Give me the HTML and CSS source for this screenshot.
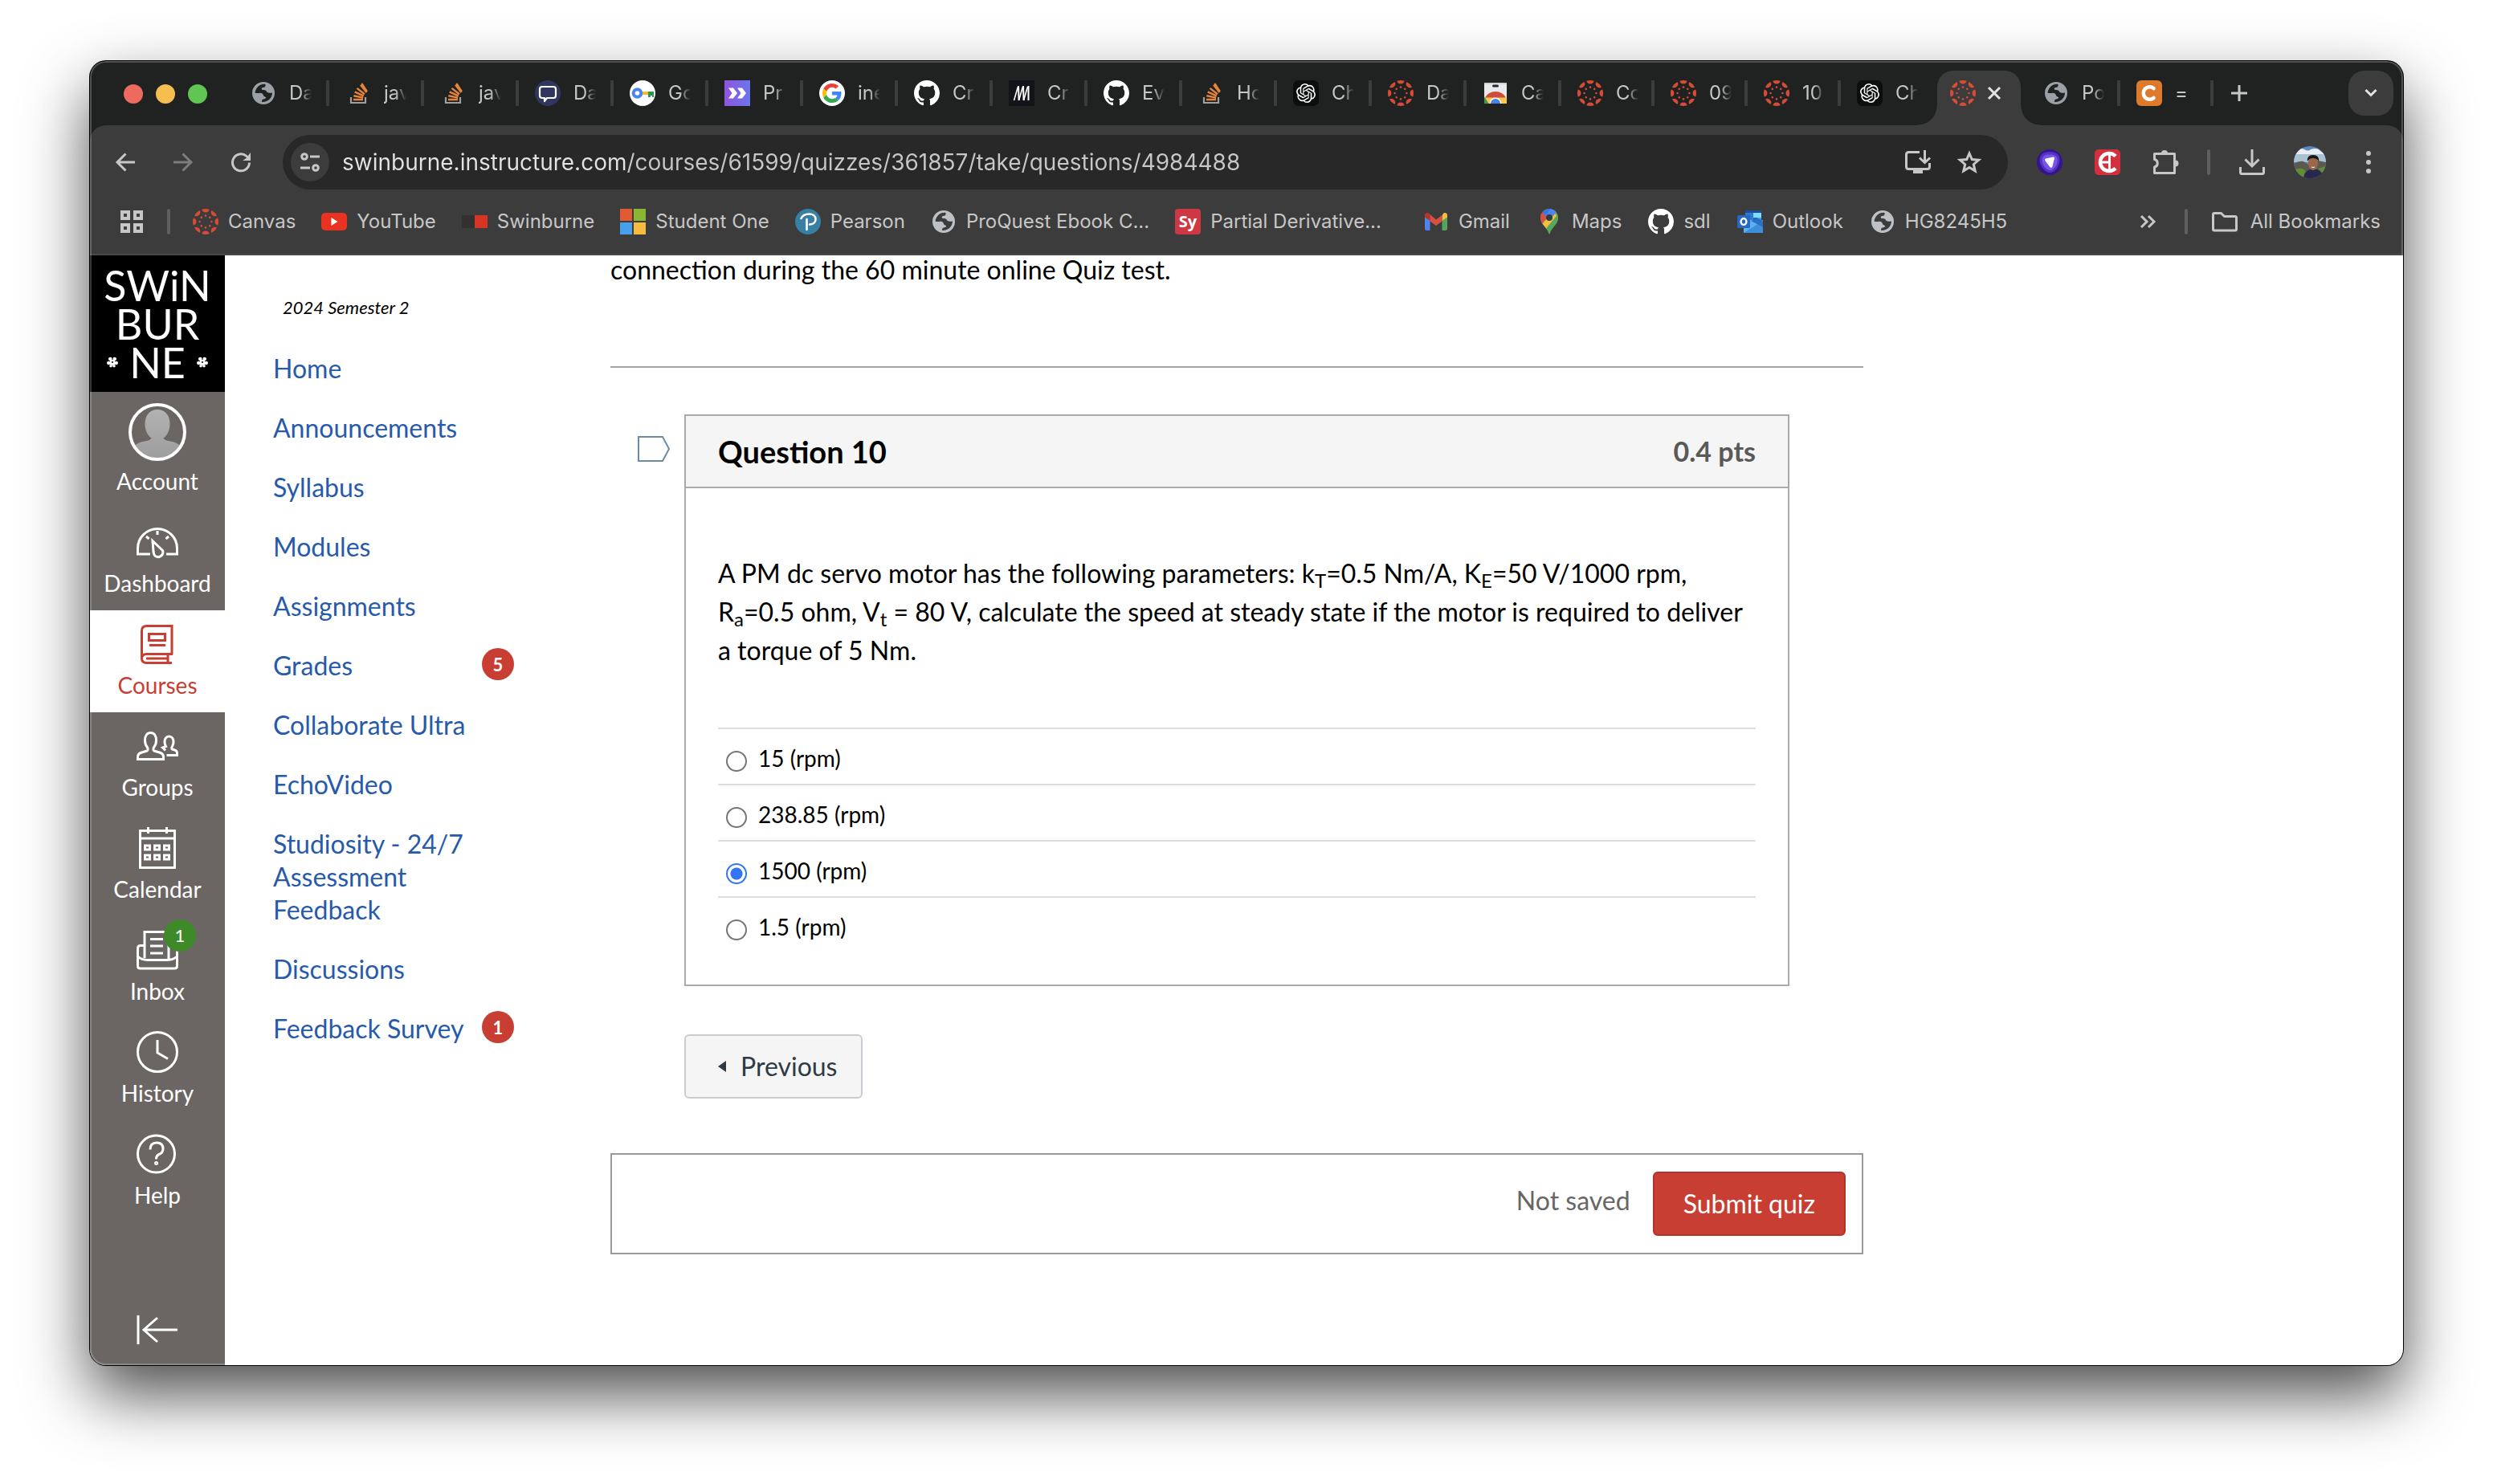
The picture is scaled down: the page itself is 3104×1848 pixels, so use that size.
FILE: index.html
```html
<!DOCTYPE html>
<html lang="en">
<head>
<meta charset="utf-8">
<meta name="viewport" content="width=device-width, initial-scale=1">
<title>Quiz: Question 10</title>
<link rel="stylesheet" href="styles.css">
</head>
<body>
<svg class="sprite" aria-hidden="true">
  <defs>
    <linearGradient id="gradPurple" x1="0" x2="1"><stop offset="0" stop-color="#8f55dd"/><stop offset="1" stop-color="#6a76ea"/></linearGradient>
    <linearGradient id="gradPerson" x1="0" x2="0" y1="0" y2="1"><stop offset="0" stop-color="#b2b2b2"/><stop offset="1" stop-color="#9c9c9c"/></linearGradient>
    <clipPath id="clipFace"><circle cx="20" cy="20" r="20"/></clipPath>
    <clipPath id="clipPerson"><circle cx="36" cy="36" r="33"/></clipPath>
    <clipPath id="clipStore"><rect x="2" y="3" width="28" height="26"/></clipPath>
    <clipPath id="clipPin"><path d="M16 0C9.600 0 5 5 5 11.200c0 4.300 2.300 7.300 5 10.600 2.700 3.300 4.700 6.200 6 10.200 1.300-4 3.300-6.900 6-10.200 2.700-3.300 5-6.300 5-10.600C27 5 22.400 0 16 0z"/></clipPath>
    <g id="petal">
      <path d="M11.400 .7A16 16 0 0 1 20.600 .7A4.700 4.700 0 0 1 11.400 .7Z"/>
      <circle cx="16" cy="8.600" r="1.300"/>
    </g>
  </defs>
  <symbol id="i-canvas" viewBox="0 0 32 32">
    <g fill="#d64c38">
      <use href="#petal"/><use href="#petal" transform="rotate(45 16 16)"/><use href="#petal" transform="rotate(90 16 16)"/><use href="#petal" transform="rotate(135 16 16)"/>
      <use href="#petal" transform="rotate(180 16 16)"/><use href="#petal" transform="rotate(225 16 16)"/><use href="#petal" transform="rotate(270 16 16)"/><use href="#petal" transform="rotate(315 16 16)"/>
    </g>
  </symbol>
  <symbol id="i-globe" viewBox="0 0 32 32">
    <path fill="currentColor" fill-rule="evenodd" d="M16 2a14 14 0 1 0 0 28 14 14 0 0 0 0-28zM18.500 4.900c-4.200-.6-8.500 1.400-11 5-.9 1.400-1.700 3.300-2 5.600 1.800.7 4.500.5 6.300.3 2.300-.1 3.700 1.300 4.100 2.900.6 1.700 2.200 1.500 3.300 2.500-.2 1.800-1.800 2-3.300 2.200-1.700.4-1.900 2-1.900 3.300 3.800.8 8.300-1 10.700-4.400 1.400-1.900 2.300-4.300 2.300-6.800-2 .3-4.500.7-6.200-.4-1-.7-.9-2.300-2.300-2.700-1.900-.5-4.200.2-4.800-1.700-.3-1.800 1.800-1.800 3.200-2 1.600-.3 1.700-1.800 1.600-3.800z"/>
  </symbol>
  <symbol id="i-stack" viewBox="0 0 32 32">
    <path fill="none" stroke="#9ca0a5" stroke-width="2.200" d="M7 21v7h18v-7"/>
    <g stroke="#e8833a" stroke-width="2.400"><path d="M10 24h12M10.300 19.200l11.900 2.400M11.700 14.400l11 5M14.500 9.900l9.400 7.300M19 5.800l7.400 9.300M20.300 4l6.600 10"/></g>
  </symbol>
  <symbol id="i-chat" viewBox="0 0 32 32">
    <circle cx="16" cy="16" r="16" fill="#30365e"/>
    <path fill="none" stroke="#fff" stroke-width="2.200" stroke-linejoin="round" d="M9 8h14q3 0 3 3v8q0 3-3 3h-8l-3 4v-4H9q-3 0-3-3v-8q0-3 3-3z"/>
  </symbol>
  <symbol id="i-key" viewBox="0 0 32 32">
    <circle cx="16" cy="16" r="16" fill="#fff"/>
    <path fill="#f9bb2d" d="M13 14h11v4H13z"/><path fill="#e94335" d="M13 14h3v4h-3z"/><path fill="#2e9648" d="M23 14h7v7h-2v-2h-2v2h-3z"/>
    <circle cx="9.500" cy="16" r="4.800" fill="none" stroke="#4a84f0" stroke-width="4"/>
  </symbol>
  <symbol id="i-dash" viewBox="0 0 32 32">
    <path fill="url(#gradPurple)" d="M0 0h32v32H0z"/><path fill="#fff" d="M5 9.500h6l5 6.500-5 6.500H5L9.500 16zM16 9.500h6l5 6.500-5 6.500h-6l4.500-6.500z"/>
  </symbol>
  <symbol id="i-google" viewBox="0 0 32 32">
    <circle cx="16" cy="16" r="16" fill="#fff"/>
    <g transform="translate(4 4) scale(.5)">
      <path fill="#EA4335" d="M24 9.500c3.540 0 6.710 1.220 9.210 3.600l6.850-6.850C35.900 2.380 30.470 0 24 0 14.620 0 6.510 5.380 2.560 13.220l7.980 6.190C12.430 13.720 17.740 9.500 24 9.500z"/>
      <path fill="#4285F4" d="M46.980 24.550c0-1.570-.15-3.090-.38-4.550H24v9.020h12.940c-.58 2.960-2.260 5.480-4.780 7.180l7.730 6c4.510-4.180 7.090-10.360 7.090-17.650z"/>
      <path fill="#FBBC05" d="M10.530 28.590c-.48-1.450-.76-2.990-.76-4.590s.27-3.140.76-4.590l-7.980-6.190C.92 16.460 0 20.120 0 24c0 3.880.92 7.540 2.560 10.780l7.970-6.190z"/>
      <path fill="#34A853" d="M24 48c6.480 0 11.930-2.130 15.890-5.810l-7.730-6c-2.150 1.450-4.920 2.300-8.160 2.300-6.260 0-11.570-4.220-13.470-9.910l-7.980 6.190C6.510 42.620 14.620 48 24 48z"/>
    </g>
  </symbol>
  <symbol id="i-github" viewBox="0 0 16 16">
    <path fill="#fff" d="M8 0C3.580 0 0 3.580 0 8c0 3.540 2.290 6.530 5.470 7.590.4.070.55-.17.55-.38 0-.19-.01-.82-.01-1.490-2.010.37-2.530-.49-2.690-.94-.09-.23-.48-.94-.82-1.130-.28-.15-.68-.52-.01-.53.63-.01 1.080.58 1.230.82.72 1.210 1.870.87 2.330.66.07-.52.28-.87.51-1.070-1.780-.2-3.640-.89-3.640-3.950 0-.87.31-1.590.82-2.150-.08-.2-.36-1.020.08-2.120 0 0 .67-.21 2.200.82.64-.18 1.320-.27 2-.27.68 0 1.360.09 2 .27 1.530-1.040 2.200-.82 2.200-.82.44 1.100.16 1.920.08 2.120.51.56.82 1.270.82 2.150 0 3.070-1.870 3.750-3.650 3.950.29.25.54.73.54 1.480 0 1.070-.01 1.930-.01 2.200 0 .21.15.46.55.38A8.013 8.013 0 0 0 16 8c0-4.420-3.580-8-8-8z"/>
  </symbol>
  <symbol id="i-m" viewBox="0 0 32 32">
    <path fill="#13131a" d="M0 0h32v32H0z"/><path fill="none" stroke="#fff" stroke-width="1.600" d="M6.500 25l5-17M12.500 25l5-17M18.500 25l5-17"/><path stroke="#fff" stroke-width="2" d="M12 7l.6 18M18 7l.6 18M24.500 7v18"/>
  </symbol>
  <symbol id="i-gpt" viewBox="0 0 32 32">
    <rect width="32" height="32" rx="7" fill="#0c0d0d"/>
    <path fill="#fff" transform="translate(4 4)" d="M22.2819 9.8211a5.9847 5.9847 0 0 0-.5157-4.9108 6.0462 6.0462 0 0 0-6.5098-2.9A6.0651 6.0651 0 0 0 4.9807 4.1818a5.9847 5.9847 0 0 0-3.9977 2.9 6.0462 6.0462 0 0 0 .7427 7.0966 5.98 5.98 0 0 0 .511 4.9107 6.051 6.051 0 0 0 6.5146 2.9001A5.9847 5.9847 0 0 0 13.2599 24a6.0557 6.0557 0 0 0 5.7718-4.2058 5.9894 5.9894 0 0 0 3.9977-2.9001 6.0557 6.0557 0 0 0-.7475-7.0729zm-9.022 12.6081a4.4755 4.4755 0 0 1-2.8764-1.0408l.1419-.0804 4.7783-2.7582a.7948.7948 0 0 0 .3927-.6813v-6.7369l2.02 1.1686a.071.071 0 0 1 .038.052v5.5826a4.504 4.504 0 0 1-4.4945 4.4944zm-9.6607-4.1254a4.4708 4.4708 0 0 1-.5346-3.0137l.142.0852 4.783 2.7582a.7712.7712 0 0 0 .7806 0l5.8428-3.3685v2.3324a.0804.0804 0 0 1-.0332.0615L9.74 19.9502a4.4992 4.4992 0 0 1-6.1408-1.6464zM2.3408 7.8956a4.485 4.485 0 0 1 2.3655-1.9728V11.6a.7664.7664 0 0 0 .3879.6765l5.8144 3.3543-2.0201 1.1685a.0757.0757 0 0 1-.071 0l-4.8303-2.7865A4.504 4.504 0 0 1 2.3408 7.872zm16.5963 3.8558L13.1038 8.364 15.1192 7.2a.0757.0757 0 0 1 .071 0l4.8303 2.7913a4.4944 4.4944 0 0 1-.6765 8.1042v-5.6772a.79.79 0 0 0-.407-.667zm2.0107-3.0231l-.142-.0852-4.7735-2.7818a.7759.7759 0 0 0-.7854 0L9.409 9.2297V6.8974a.0662.0662 0 0 1 .0284-.0615l4.8303-2.7866a4.4992 4.4992 0 0 1 6.6802 4.66zM8.3065 12.863l-2.02-1.1638a.0804.0804 0 0 1-.038-.0567V6.0742a4.4992 4.4992 0 0 1 7.3757-3.4537l-.142.0805L8.704 5.459a.7948.7948 0 0 0-.3927.6813zm1.0976-2.3654l2.602-1.4998 2.6069 1.4998v2.9994l-2.5974 1.4997-2.6067-1.4997Z"/>
  </symbol>
  <symbol id="i-store" viewBox="0 0 32 32">
    <g clip-path="url(#clipStore)">
      <path fill="#e9eaec" d="M2 3h28v26H2z"/><path fill="#cfd1d5" d="M2 3h28v2H2z"/><rect x="12" y="5.500" width="8" height="3" rx="1.500" fill="#26282c"/>
      <circle cx="16" cy="29" r="15" fill="#fbc94a"/><path fill="#cf4a3f" d="M3 21.500A15 15 0 0 1 29 21.500H16z"/><path fill="#3f9a55" d="M3 21.500L10 33H0V21z"/>
      <circle cx="16" cy="29" r="7.500" fill="#fff"/><circle cx="16" cy="29" r="6" fill="#4a80ea"/>
    </g>
  </symbol>
  <symbol id="i-c" viewBox="0 0 32 32">
    <rect width="32" height="32" rx="6" fill="#de7a2b"/><path fill="none" stroke="#fff" stroke-width="4.500" stroke-linecap="round" d="M21.500 10a7.800 7.800 0 1 0 0 12"/>
  </symbol>
  <symbol id="i-youtube" viewBox="0 0 32 32"><rect y="5" width="32" height="22" rx="5" fill="#ea3223"/><path fill="#fff" d="M12.500 11l8 5-8 5z"/></symbol>
  <symbol id="i-swin" viewBox="0 0 32 32"><path fill="#313131" d="M0 8h16v16H0z"/><path fill="#d93526" d="M16 8h16v16H16z"/></symbol>
  <symbol id="i-ms" viewBox="0 0 32 32"><path fill="#e05b32" d="M0 0h15v15H0z"/><path fill="#8ab733" d="M17 0h15v15H17z"/><path fill="#48a0ea" d="M0 17h15v15H0z"/><path fill="#f6bb41" d="M17 17h15v15H17z"/></symbol>
  <symbol id="i-pearson" viewBox="0 0 32 32"><circle cx="16" cy="16" r="16" fill="#377fa3"/><path fill="none" stroke="#fff" stroke-width="2.600" stroke-linecap="round" d="M7.500 12c2-4.500 6-5.500 10-5.500 5 0 8 2.500 8 6.500 0 4.200-3.500 6.500-7.500 6.500M14.500 13v13"/></symbol>
  <symbol id="i-sy" viewBox="0 0 32 32"><rect width="32" height="32" rx="4" fill="#ce3744"/><text x="16" y="23" text-anchor="middle" class="sy-mark">Sy</text></symbol>
  <symbol id="i-gmail" viewBox="0 0 32 32">
    <path fill="#4f83ee" d="M2 9v15.500Q2 27 4.500 27H8.500V13z"/><path fill="#56a45a" d="M23.500 13v14h4Q30 27 30 24.500V9z"/><path fill="#f2bd42" d="M23.500 8.500V15L30 10.500V8c0-2.600-3-3.800-5-2.300z"/><path fill="#b83428" d="M2 8v2.500L8.500 15V8.500L7 5.700C5 4.200 2 5.400 2 8z"/><path fill="#d8503f" d="M8.500 8v7.500L16 21l7.500-5.500V8L16 13.500 7 5.700z"/>
  </symbol>
  <symbol id="i-maps" viewBox="0 0 32 32">
    <g clip-path="url(#clipPin)"><path fill="#58a55c" d="M0 0h32v32H0z"/><path fill="#f2bd42" d="M5 21L21 3l6 8-12 16z"/><path fill="#58a55c" d="M12 24.500L27.500 6v26H16z"/><path fill="#d8503f" d="M4 5l4-2 6 7-7 9-3-5z"/><path fill="#4f83ee" d="M7 4l9-5h6l3 5-9 10z"/><path fill="#3a74dc" d="M7 4l4-4h6l-5 8z"/></g>
    <circle cx="16" cy="11" r="4" fill="#2d3c3c"/>
  </symbol>
  <symbol id="i-outlook" viewBox="0 0 32 32">
    <path fill="#1c4a9c" d="M10 2h20v5H10z"/><path fill="#2e7cd2" d="M10 5h10v14H10z"/><path fill="#7fdbfb" d="M20 5h10v6H20z"/><path fill="#3aa0e8" d="M20 11h10v8H20z"/><path fill="#2467b8" d="M20 11h5v6h-5z"/><path fill="#5ab2ee" d="M8 14h24v16H8z"/><path fill="#3d8fdb" d="M8 30l24-15v15z"/><path fill="#2c6fc2" d="M17 15l15 8v-8l-6-3z"/>
    <rect y="8" width="16" height="16" rx="1.500" fill="#2867c4"/><ellipse cx="8" cy="16" rx="3.400" ry="4" fill="none" stroke="#fff" stroke-width="2.400"/>
  </symbol>
  <symbol id="i-folder" viewBox="0 0 32 32"><path fill="none" stroke="#c7c7c7" stroke-width="3" stroke-linejoin="round" d="M3 5.500h8.500l4 4H29q1.500 0 1.500 1.500v14.500Q30.500 27 29 27H3q-1.500 0-1.500-1.500V7q0-1.500 1.500-1.500z"/></symbol>
  <symbol id="i-flower" viewBox="0 0 14 14">
    <g fill="#fff"><circle cx="7" cy="9.500" r="1.600"/><circle cx="4.300" cy="3" r="2.300"/><circle cx="9.700" cy="3" r="2.300"/><circle cx="2.300" cy="8" r="2.300"/><circle cx="11.700" cy="8" r="2.300"/><circle cx="5" cy="11.800" r="1.800"/><circle cx="9" cy="11.800" r="1.800"/><path d="M4 4h6v6H4z"/></g><circle cx="7" cy="7" r="1" fill="#000"/>
  </symbol>
</svg>

<main class="window">
  <header class="tabstrip">
    <div class="lights"><span class="light light-close"></span><span class="light light-min"></span><span class="light light-max"></span></div>
    <div class="tabs wide">
      <button class="tab"><svg class="ico grey"><use href="#i-globe"/></svg><span>Da</span></button>
      <button class="tab"><svg class="ico"><use href="#i-stack"/></svg><span>jav</span></button>
      <button class="tab"><svg class="ico"><use href="#i-stack"/></svg><span>jav</span></button>
      <button class="tab"><svg class="ico"><use href="#i-chat"/></svg><span>Da</span></button>
      <button class="tab"><svg class="ico"><use href="#i-key"/></svg><span>Go</span></button>
      <button class="tab"><svg class="ico"><use href="#i-dash"/></svg><span>Pr</span></button>
      <button class="tab"><svg class="ico"><use href="#i-google"/></svg><span>ine</span></button>
      <button class="tab"><svg class="ico"><use href="#i-github"/></svg><span>Cr</span></button>
      <button class="tab"><svg class="ico"><use href="#i-m"/></svg><span>Cr</span></button>
      <button class="tab"><svg class="ico"><use href="#i-github"/></svg><span>Ev</span></button>
      <button class="tab"><svg class="ico"><use href="#i-stack"/></svg><span>Ho</span></button>
      <button class="tab"><svg class="ico"><use href="#i-gpt"/></svg><span>Ch</span></button>
      <button class="tab"><svg class="ico"><use href="#i-canvas"/></svg><span>Da</span></button>
      <button class="tab"><svg class="ico"><use href="#i-store"/></svg><span>Ca</span></button>
    </div>
    <div class="tabs narrow">
      <button class="tab"><svg class="ico"><use href="#i-canvas"/></svg><span>Co</span></button>
      <button class="tab"><svg class="ico"><use href="#i-canvas"/></svg><span>09</span></button>
      <button class="tab"><svg class="ico"><use href="#i-canvas"/></svg><span>10</span></button>
      <button class="tab last"><svg class="ico"><use href="#i-gpt"/></svg><span>Ch</span></button>
      <div class="tab-active">
        <svg class="ico"><use href="#i-canvas"/></svg>
        <button class="plain" aria-label="Close tab"><svg class="x-ico" viewBox="0 0 18 18"><path d="M2 2l14 14M16 2L2 16"/></svg></button>
      </div>
      <button class="tab"><svg class="ico grey"><use href="#i-globe"/></svg><span>Po</span></button>
      <button class="tab"><svg class="ico"><use href="#i-c"/></svg><span>=</span></button>
    </div>
    <button class="plain new-tab" aria-label="New tab"><svg class="plus-ico" viewBox="0 0 20 20"><path d="M10 0v20M0 10h20"/></svg></button>
    <button class="tab-search" aria-label="Search tabs"><svg class="chev-ico" viewBox="0 0 16 12"><path d="M1.500 2L8 8.500 14.500 2"/></svg></button>
  </header>

  <div class="chrome">
    <div class="toolbar">
      <button class="plain" aria-label="Back"><svg class="nav-ico" viewBox="0 0 24 24"><path d="M24 12H2M12.500 1.500L2 12l10.500 10.500"/></svg></button>
      <button class="plain dim" aria-label="Forward"><svg class="nav-ico" viewBox="0 0 24 24"><path d="M0 12h22M11.500 1.500L22 12 11.500 22.500"/></svg></button>
      <button class="plain" aria-label="Reload"><svg class="nav-ico" viewBox="0 0 24 24"><path d="M22.500 12.500A10.500 10.500 0 1 1 19 4.500l3 3"/><path class="fill" d="M24 0v10H14l4.500-3z"/></svg></button>
      <div class="omnibox">
        <button class="site-info" aria-label="View site information"><svg viewBox="0 0 24 24" class="nav-ico"><circle cx="5" cy="5" r="3.300"/><path d="M12 5h12M0 19h12"/><circle cx="19" cy="19" r="3.300"/></svg></button>
        <input class="url" type="text" aria-label="Address and search bar" value="swinburne.instructure.com/courses/61599/quizzes/361857/take/questions/4984488">
        <button class="plain" aria-label="Install"><svg class="tool-ico" viewBox="0 0 32 32"><path d="M18 3.500H4.500q-3 0-3 3v15q0 3 3 3h23q3 0 3-3V17M24.500 1v14M18 10.500l6.500 6 6.500-6"/><path class="fill" d="M10 24h12v6H10z"/></svg></button>
        <button class="plain" aria-label="Bookmark this tab"><svg class="tool-ico" viewBox="0 0 32 32"><path d="M16 5l3.300 7.600 8.300.7-6.300 5.400 1.900 8.100L16 22.500l-7.200 4.300 1.900-8.100-6.300-5.400 8.300-.7z"/></svg></button>
      </div>
      <div class="extensions">
        <button class="plain" aria-label="Shield extension"><svg class="tool-ico" viewBox="0 0 32 32"><g stroke="none"><circle cx="16" cy="16" r="16" fill="#35148f"/><path fill="#5433c4" d="M16 3c7 0 13 3 12.500 10.500C28 22 22 29 16.500 29S4 21 3.500 13.500C3.500 6 9 3 16 3z"/><path fill="#7957e6" d="M16 6.500c5.500 0 10 1.500 9.700 7.500-.4 6-4.700 12-9.200 12S7 19.500 6.500 14C6.500 8 11 6.500 16 6.500z"/><path fill="#fff" d="M11 11.500l9-2q2-.4 2 1.600l-2.700 10.400q-.8 2-2.700.7L10.300 14q-.7-1.800.7-2.500z"/></g></svg></button>
        <button class="plain" aria-label="Capture extension"><svg class="tool-ico" viewBox="0 0 32 32"><rect width="32" height="32" rx="5" fill="#d32f3c" stroke="none"/><path stroke="#fff" stroke-width="4.500" d="M26 8.500A11 11 0 1 0 26 23.500"/><path stroke="#fff" stroke-width="3" d="M18.500 5v22M5 16h12"/></svg></button>
        <button class="plain" aria-label="Extensions"><svg class="tool-ico" viewBox="0 0 32 32"><path d="M2.500 5.500h25v24h-25v-7.500c5-1 5-8.500 0-9.500z" stroke-linejoin="round"/><path class="fill" d="M11 5a4 4 0 0 1 8 0zM28.500 13.500a4 4 0 0 1 0 8z"/></svg></button>
      </div>
      <div class="browser-tools">
        <span class="bar"></span>
        <button class="plain" aria-label="Downloads"><svg class="tool-ico" viewBox="0 0 32 32"><path d="M16 0v21M7.500 12.500L16 21l8.500-8.500M1.500 22v6.500q0 2 2 2h25q2 0 2-2V22"/></svg></button>
        <button class="plain" aria-label="Profile"><svg class="face" viewBox="0 0 40 40"><g clip-path="url(#clipFace)"><path fill="#5d87bb" d="M0 0h40v40H0z"/><path fill="#e9eef4" d="M3 6q5-5 10-2t8 0q8-3 12 2l7 5H0z"/><path fill="#a9c2d2" d="M0 10h40v10H0z"/><path fill="#5c5a50" d="M0 22q6-4 12-3l6 4 12-5 10 2v20H0z"/><path fill="#5f8f35" d="M0 30q7-4 13-1l5 9H0zM30 28l10-3v12z"/><path fill="#28284f" d="M12 40q1-9 8-11h9q7 3 7 11z"/><ellipse cx="24" cy="21" rx="6" ry="9" fill="#9a6749"/><path fill="#1b1718" d="M17 19q-1-8 7-8t7 8q-2-4-7-4t-7 4z"/><path stroke="#fff" stroke-width="1" fill="none" d="M22 26q2 1 4 0"/></g></svg></button>
        <button class="plain" aria-label="Menu"><svg class="dots" viewBox="0 0 6 28"><circle cx="3" cy="3" r="3"/><circle cx="3" cy="14" r="3"/><circle cx="3" cy="25" r="3"/></svg></button>
      </div>
    </div>
    <nav class="bookmarks" aria-label="Bookmarks">
      <button class="plain apps" aria-label="Tab groups"><svg class="grid-ico" viewBox="0 0 28 28"><path d="M2 2h8v8H2zM18 2h8v8h-8zM2 18h8v8H2zM18 18h8v8h-8z"/></svg></button>
      <span class="bar"></span>
      <div class="bookmark-list">
        <a href="#"><svg class="ico"><use href="#i-canvas"/></svg>Canvas</a>
        <a href="#"><svg class="ico"><use href="#i-youtube"/></svg>YouTube</a>
        <a href="#"><svg class="ico"><use href="#i-swin"/></svg>Swinburne</a>
        <a href="#"><svg class="ico"><use href="#i-ms"/></svg>Student One</a>
        <a href="#"><svg class="ico"><use href="#i-pearson"/></svg>Pearson</a>
        <a href="#"><svg class="ico pale"><use href="#i-globe"/></svg>ProQuest Ebook C...</a>
        <a href="#"><svg class="ico"><use href="#i-sy"/></svg>Partial Derivative...</a>
      </div>
      <div class="bookmark-list">
        <a href="#"><svg class="ico"><use href="#i-gmail"/></svg>Gmail</a>
        <a href="#"><svg class="ico"><use href="#i-maps"/></svg>Maps</a>
        <a href="#"><svg class="ico"><use href="#i-github"/></svg>sdl</a>
        <a href="#"><svg class="ico"><use href="#i-outlook"/></svg>Outlook</a>
        <a href="#"><svg class="ico pale"><use href="#i-globe"/></svg>HG8245H5</a>
      </div>
      <button class="plain more" aria-label="More bookmarks"><svg class="more-ico" viewBox="0 0 20 16"><path d="M2 1l7 7-7 7M11 1l7 7-7 7"/></svg></button>
      <span class="bar"></span>
      <a class="all" href="#"><svg class="ico"><use href="#i-folder"/></svg>All Bookmarks</a>
    </nav>
  </div>

  <div class="page">
    <nav class="global-nav" aria-label="Global navigation">
      <a class="logo" href="#" aria-label="Swinburne">
        <span>SWiN</span><span>BUR</span>
        <span class="logo-last"><svg class="flower"><use href="#i-flower"/></svg>NE<svg class="flower"><use href="#i-flower"/></svg></span>
      </a>
      <a class="item account" href="#"><svg class="avatar" viewBox="0 0 72 72"><circle cx="36" cy="36" r="34" fill="#6b6663"/><g clip-path="url(#clipPerson)" fill="url(#gradPerson)"><path d="M36 8c9 0 15.500 6.500 15.500 18 0 8-3.500 14.500-8 17.500 1 3 6 3.500 11 4.500 6 1.500 10 4 11.500 9V72H6V57c1.500-5 5.500-7.500 11.500-9 5-1 10-1.500 11-4.500-4.500-3-8-9.500-8-17.500C20.500 14.500 27 8 36 8z"/></g><circle cx="36" cy="36" r="34" fill="none" stroke="#fff" stroke-width="4"/></svg>Account</a>
      <a class="item" href="#"><svg class="nav-icon" viewBox="0 0 52 52"><path d="M17 41H1.500v-7a24.500 24.500 0 0 1 49 0v7H37M26 12v5M12 19l3.500 3M40 19l-3.500 3M20 24.500l12.500 12a6 6 0 0 1-9 7q-2-1-2.500-6z"/></svg>Dashboard</a>
      <a class="item current" href="#"><svg class="nav-icon" viewBox="0 0 52 52"><path d="M44 38.500V3.500H12.500q-6 0-6 6V44q0 5.500 6 5.500h31.500M6.500 44q0-5.500 6-5.500H45M12 44h27M39 38.500v11M16 27.500h20M15.500 13.500h20v8h-20z"/></svg>Courses</a>
      <a class="item" href="#"><svg class="nav-icon" viewBox="0 0 52 52"><path d="M1.500 42.500v-3c0-3 1.500-4.500 5-5.500l6.500-2c1.500-.6 1.500-3 0-5-2-2.500-2.500-5-2.500-8 0-5.500 2.500-9.500 7-9.500s7 4 7 9.500c0 3-.5 5.500-2.500 8-1.500 2-1.500 4.400 0 5l6.500 2c3.500 1 5 2.500 5 5.500v3z"/><path d="M37.500 37.500h13v-2.500c0-2-1-3.500-3-4l-3-1c-1.200-.5-1-2 0-3.500 1-1.700 1.500-3.500 1.500-5.500 0-4-2-7-5.500-7s-5.500 3-5.500 7c0 2 .5 3.800 1.500 5.500l-4 1.500 3.500 3.500"/></svg>Groups</a>
      <a class="item" href="#"><svg class="nav-icon" viewBox="0 0 52 52"><path d="M4.500 4.500h43v46h-43zM4.500 14h43M14.500 0v8M37.500 0v8"/><path d="M10.500 23h6v5h-6zM22.500 23h6v5h-6zM34.500 23h6v5h-6zM10.500 35h6v5h-6zM22.500 35h6v5h-6zM34.500 35h6v5h-6z"/></svg>Calendar</a>
      <a class="item" href="#"><svg class="nav-icon" viewBox="0 0 52 52"><path d="M10 36V3.500h30V38M10 20.500H5q-3.500 0-3.500 3.500v22q0 3 3.500 3h42q3.500 0 3.500-3V24q0-3.500-3.500-3.500h-5M1.500 34c5 4.500 9 4.500 12 4.500h25c3 0 7 0 12-4.500M17 12.500h16M17 21h16M17 30h16"/></svg><span class="badge green">1</span>Inbox</a>
      <a class="item" href="#"><svg class="nav-icon" viewBox="0 0 52 52"><circle cx="26" cy="26" r="24.500"/><path d="M26 11v16l13 7.500"/></svg>History</a>
      <a class="item" href="#"><svg class="nav-icon" viewBox="0 0 52 52"><circle cx="24.500" cy="26" r="23"/><path d="M17 20.500q0-8.500 8-8.500t8 7.500q0 5-5 7-3.500 1.500-3.500 6"/><circle cx="24.500" cy="37.500" r="1"/></svg>Help</a>
      <button class="plain collapse" aria-label="Minimize global navigation"><svg class="nav-icon" viewBox="0 0 52 52"><path d="M2 8v36M51 26H9M26 11L9 26l17 15"/></svg></button>
    </nav>

    <nav class="course-nav" aria-label="Course navigation">
      <p class="term">2024 Semester 2</p>
      <a href="#">Home</a>
      <a href="#">Announcements</a>
      <a href="#">Syllabus</a>
      <a href="#">Modules</a>
      <a href="#">Assignments</a>
      <a href="#">Grades<span class="badge">5</span></a>
      <a href="#">Collaborate Ultra</a>
      <a href="#">EchoVideo</a>
      <a href="#">Studiosity - 24/7 Assessment Feedback</a>
      <a href="#">Discussions</a>
      <a href="#">Feedback Survey<span class="badge">1</span></a>
    </nav>

    <section class="quiz">
      <p class="intro">connection during the 60 minute online Quiz test.</p>
      <form class="quiz-form">
        <div class="question-row">
          <svg class="flag" viewBox="0 0 40 32"><path d="M1 1h30l8 15-8 15H1z"/></svg>
          <article class="question">
            <header><h2>Question 10</h2><span>0.4 pts</span></header>
            <p class="question-text">A PM dc servo motor has the following parameters: k<sub>T</sub>=0.5 Nm/A, K<sub>E</sub>=50 V/1000 rpm, R<sub>a</sub>=0.5 ohm, V<sub>t</sub> = 80 V, calculate the speed at steady state if the motor is required to deliver a torque of 5 Nm.</p>
            <div class="answers">
              <label><input type="radio" name="answer">15 (rpm)</label>
              <label><input type="radio" name="answer">238.85 (rpm)</label>
              <label><input type="radio" name="answer" checked>1500 (rpm)</label>
              <label><input type="radio" name="answer">1.5 (rpm)</label>
            </div>
          </article>
        </div>
        <button class="previous" type="button"><svg class="tri" viewBox="0 0 10 14"><path d="M10 0v14L0 7z"/></svg>Previous</button>
        <div class="submit-row"><span>Not saved</span><button class="submit" type="button">Submit quiz</button></div>
      </form>
    </section>
  </div>
</main>
</body>
</html>
```
FILE: styles.css
```css
* { box-sizing: border-box; }

body {
  margin: 0;
  min-height: 100vh;
  padding: 76px 112px 148px;
  display: flex;
  background: #fff;
  font-family: Lato, sans-serif;
  font-size: 32px;
  color: #000;
}

a { color: inherit; text-decoration: none; }
button { font: inherit; color: inherit; cursor: pointer; }
svg { display: block; flex: none; overflow: visible; }
.sprite { position: absolute; width: 0; height: 0; }
.plain { padding: 0; border: 0; background: none; flex: none; }

/* Window */
.window {
  position: relative;
  flex: 1;
  min-width: 0;
  display: flex;
  flex-direction: column;
  border-radius: 20px;
  overflow: hidden;
  background: #202221;
  box-shadow: 0 0 0 1px #000, 0 36px 80px rgba(0, 0, 0, .7);
}
.window::after {
  content: "";
  position: absolute;
  inset: 0;
  border-radius: 20px;
  box-shadow: inset 0 0 0 2px rgba(255, 255, 255, .22);
  pointer-events: none;
}

/* Tab strip */
.tabstrip {
  display: flex;
  align-items: center;
  height: 80px;
  padding: 0 12px 0 42px;
  font: 24px/32px Inter, sans-serif;
  color: #c7c7c7;
}
.lights { display: flex; gap: 16px; margin: 2px 34px 0 0; }
.light { width: 24px; height: 24px; border-radius: 50%; }
.light-close { background: #ed6a5f; }
.light-min { background: #f5bf4f; }
.light-max { background: #61c554; }
.tabs { display: flex; align-items: center; height: 80px; }
.tab {
  display: flex;
  align-items: center;
  gap: 16px;
  width: 118px;
  height: 32px;
  padding: 0 0 0 20px;
  border: 0;
  border-right: 4px solid #3c3c3c;
  background: none;
  text-align: left;
}
.narrow .tab { width: 116px; }
.tab.last { border-color: transparent; }
.tab span {
  width: 28px;
  overflow: hidden;
  white-space: nowrap;
  -webkit-mask-image: linear-gradient(90deg, #000 50%, transparent);
  mask-image: linear-gradient(90deg, #000 50%, transparent);
}
.ico { width: 32px; height: 32px; }
.grey { color: #9aa0a6; }
.pale { color: #bdc1c6; }
.tab-active {
  position: relative;
  align-self: flex-end;
  display: flex;
  align-items: center;
  gap: 14px;
  width: 104px;
  height: 68px;
  margin: 0 8px 0 4px;
  padding: 0 0 12px 16px;
  border-radius: 20px 20px 0 0;
  background: #3c3c3c;
}
.tab-active::before, .tab-active::after {
  content: "";
  position: absolute;
  bottom: 0;
  width: 24px;
  height: 24px;
}
.tab-active::before { right: 100%; background: radial-gradient(circle at 0 0, transparent 23px, #3c3c3c 24px); }
.tab-active::after { left: 100%; background: radial-gradient(circle at 100% 0, transparent 23px, #3c3c3c 24px); }
.x-ico { width: 18px; height: 18px; stroke: #e3e3e3; stroke-width: 3; }
.new-tab { margin-left: 22px; }
.plus-ico { width: 20px; height: 20px; stroke: #c7c7c7; stroke-width: 3; }
.tab-search {
  display: flex;
  align-items: center;
  justify-content: center;
  width: 56px;
  height: 56px;
  margin-left: auto;
  padding: 0;
  border: 0;
  border-radius: 20px;
  background: #3c3c3c;
}
.chev-ico { width: 16px; height: 12px; fill: none; stroke: #e3e3e3; stroke-width: 3; }

/* Toolbar */
.chrome {
  border-radius: 20px 20px 0 0;
  border-bottom: 2px solid #484848;
  background: #3c3c3c;
  font: 24px/32px Inter, sans-serif;
  color: #c7c7c7;
}
.toolbar {
  display: flex;
  align-items: center;
  gap: 48px;
  padding: 12px 40px 0 32px;
}
.toolbar .nav-ico { width: 24px; height: 24px; }
.toolbar .nav-ico, .toolbar .tool-ico { fill: none; stroke: #c7c7c7; stroke-width: 3; }
.toolbar .tool-ico { width: 32px; height: 32px; }
.toolbar .fill { fill: #c7c7c7; stroke: none; }
.toolbar .dim .nav-ico { stroke: #7c7c7c; }
.omnibox {
  flex: 1;
  min-width: 0;
  display: flex;
  align-items: center;
  gap: 16px;
  height: 68px;
  margin-left: -8px;
  padding: 0 32px 0 10px;
  border-radius: 34px;
  background: #282828;
}
.omnibox .plain + .plain { margin-left: 16px; }
.site-info {
  flex: none;
  display: flex;
  align-items: center;
  justify-content: center;
  width: 48px;
  height: 48px;
  padding: 0;
  border: 0;
  border-radius: 50%;
  background: #3c3c3c;
}
.url {
  flex: 1;
  min-width: 0;
  height: 48px;
  padding: 0;
  border: 0;
  outline: 0;
  font: 28px/48px Inter, sans-serif;
  background: linear-gradient(90deg, #e3e3e3 354px, #c7c7c7 354px);
  -webkit-background-clip: text;
  background-clip: text;
  color: transparent;
}
.extensions { display: flex; align-items: center; gap: 40px; margin-left: -12px; }
.browser-tools { display: flex; align-items: center; gap: 36px; margin-left: -12px; }
.face { width: 40px; height: 40px; }
.dots { width: 6px; height: 28px; fill: #c7c7c7; margin-left: 14px; }
.bar { flex: none; width: 4px; height: 32px; border-radius: 2px; background: #5f5f5f; }

/* Bookmarks */
.bookmarks {
  display: flex;
  align-items: center;
  height: 80px;
  padding: 0 28px 0 38px;
}
.apps { margin-right: 30px; }
.grid-ico { width: 28px; height: 28px; fill: none; stroke: #c7c7c7; stroke-width: 4; }
.bookmark-list { display: flex; gap: 32px; margin-left: 28px; }
.bookmark-list + .bookmark-list { gap: 33px; margin-left: 52px; }
.bookmarks a { display: flex; align-items: center; gap: 12px; white-space: nowrap; }
.more { margin: 0 36px 0 auto; }
.more-ico { width: 20px; height: 16px; fill: none; stroke: #c7c7c7; stroke-width: 3; }
.bookmarks .all { gap: 16px; margin-left: 30px; }
.sy-mark { font: 700 20px "Open Sans", sans-serif; fill: #fff; }

/* Page */
.page { flex: 1; display: flex; background: #fff; }

.global-nav {
  flex: none;
  display: flex;
  flex-direction: column;
  width: 168px;
  background: #6b6663;
  color: #fff;
  font-size: 28px;
  line-height: 34px;
}
.logo {
  display: flex;
  flex-direction: column;
  align-items: center;
  height: 170px;
  padding-top: 13px;
  background: #000;
  font: 52px/48px Lato, sans-serif;
}
.logo-last { display: flex; align-items: center; gap: 14px; }
.flower { width: 14px; height: 14px; }
.item {
  position: relative;
  display: flex;
  flex-direction: column;
  align-items: center;
  gap: 8px;
  height: 127px;
  padding-top: 16px;
}
.item.account { height: 145px; padding-top: 14px; }
.avatar { width: 72px; height: 72px; }
.nav-icon { width: 52px; height: 52px; fill: none; stroke: currentColor; stroke-width: 3; }
.item.current { background: #fff; color: #c83e33; }
.collapse { margin: auto auto 18px; }

.badge {
  position: absolute;
  display: flex;
  align-items: center;
  justify-content: center;
  width: 40px;
  height: 40px;
  border-radius: 50%;
  background: #c83e33;
  color: #fff;
  font-size: 22px;
  font-weight: 700;
}
.badge.green { top: 4px; left: 92px; background: #3e8928; font-weight: 400; }

.course-nav {
  flex: none;
  display: flex;
  flex-direction: column;
  gap: 33px;
  width: 480px;
  padding: 49px 168px 0 60px;
  color: #275aaa;
  line-height: 41px;
}
.course-nav .term {
  margin: 0 0 6px 12px;
  font-size: 22px;
  line-height: 32px;
  font-style: italic;
  color: #000;
}
.course-nav a { position: relative; }
.course-nav .badge { top: -1px; right: -48px; }

/* Quiz */
.quiz { flex: none; width: 1560px; line-height: 48px; }
.intro { margin: 0; padding: 0 0 102px; border-bottom: 2px solid #a3a3a3; line-height: 36px; }
.question-row { display: flex; align-items: flex-start; padding: 58px 92px 0 34px; }
.flag { width: 40px; height: 32px; margin: 27px 18px 0 0; fill: none; stroke: #6c8ba6; stroke-width: 2; }
.question { flex: 1; border: 2px solid #aaa; }
.question header {
  display: flex;
  align-items: center;
  justify-content: space-between;
  height: 90px;
  padding: 0 40px;
  border-bottom: 2px solid #aaa;
  background: #f5f5f5;
  font-size: 34px;
  font-weight: 700;
}
.question h2 { margin: 0; font-size: 38px; }
.question header span { color: #595959; }
.question-text { margin: 0; padding: 82px 40px 72px; }
.question-text sub { font-size: 24px; line-height: 0; vertical-align: -6px; }
.answers { padding: 0 40px 40px; }
.answers label {
  display: flex;
  align-items: center;
  gap: 14px;
  height: 70px;
  padding: 4px 0 0 10px;
  border-top: 2px solid #ddd;
  font-size: 28px;
}
.answers input {
  appearance: none;
  flex: none;
  width: 26px;
  height: 26px;
  margin: 8px 0 0;
  border: 2px solid #767676;
  border-radius: 50%;
  background: #fff;
}
.answers input:checked { border-color: #3375f6; background: radial-gradient(circle, #3375f6 7px, #fff 8px); }
.previous {
  display: flex;
  align-items: center;
  gap: 18px;
  height: 80px;
  margin: 60px 0 68px 92px;
  padding: 0 30px 0 40px;
  border: 2px solid #c7cdd1;
  border-radius: 6px;
  background: #f5f5f5;
  color: #2d3b45;
}
.tri { width: 10px; height: 14px; fill: #2d3b45; }
.submit-row {
  display: flex;
  align-items: center;
  justify-content: flex-end;
  gap: 28px;
  height: 126px;
  padding: 0 20px;
  border: 2px solid #999;
  color: #666;
}
.submit {
  height: 80px;
  padding: 0 36px;
  border: 2px solid #ae342b;
  border-radius: 6px;
  background: #c83e33;
  color: #fff;
}
.submit-row span { padding-bottom: 8px; }
```
